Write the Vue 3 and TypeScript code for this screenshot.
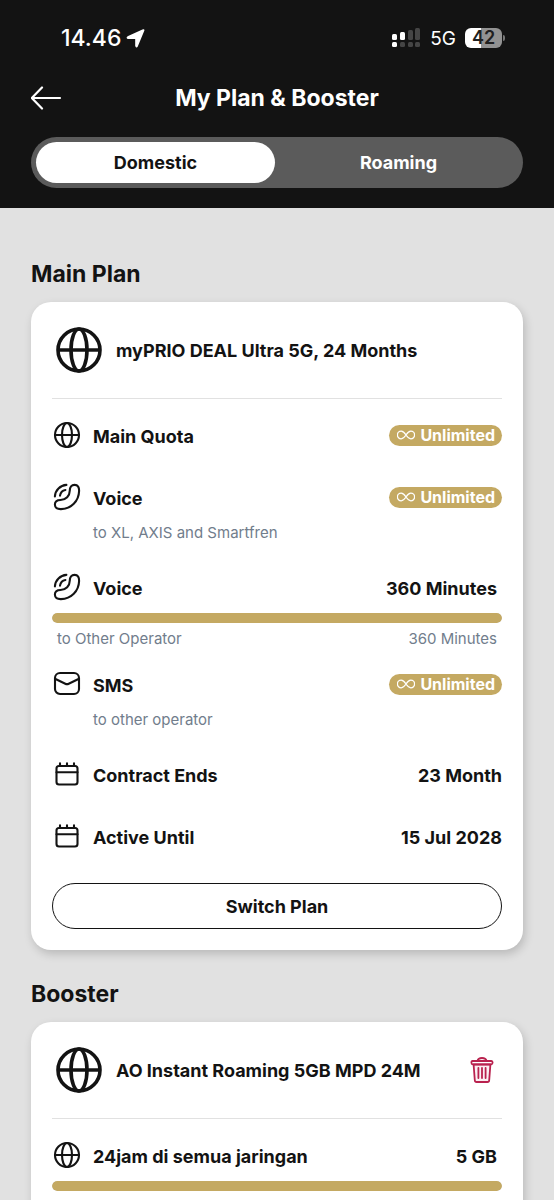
<script setup lang="ts">
import { ref } from 'vue'

type IconName = 'globe' | 'phone' | 'mail' | 'calendar'

interface Benefit {
  icon: IconName
  label: string
  value?: string
  note?: string
  left?: string
  percent?: number
}

const tabs = ['Domestic', 'Roaming']
const active = ref('Domestic')

const plan: Benefit[] = [
  { icon: 'globe', label: 'Main Quota' },
  { icon: 'phone', label: 'Voice', note: 'to XL, AXIS and Smartfren' },
  { icon: 'phone', label: 'Voice', value: '360 Minutes', note: 'to Other Operator', left: '360 Minutes', percent: 100 },
  { icon: 'mail', label: 'SMS', note: 'to other operator' },
  { icon: 'calendar', label: 'Contract Ends', value: '23 Month' },
  { icon: 'calendar', label: 'Active Until', value: '15 Jul 2028' },
]
const booster: Benefit[] = [
  { icon: 'globe', label: '24jam di semua jaringan', value: '5 GB', percent: 100 },
]
const sections = [
  { title: 'Main Plan', name: 'myPRIO DEAL Ultra 5G, 24 Months', rows: plan, main: true },
  { title: 'Booster', name: 'AO Instant Roaming 5GB MPD 24M', rows: booster, main: false },
]
</script>

<template>
  <div class="screen">
    <header class="header">
      <div class="status">
        <div class="clock">
          <span>14.46</span>
          <svg class="arrow" viewBox="0 0 18 18" aria-hidden="true"><path d="M16.6 1.4 10.4 16.3Q9.8 17.2 9.5 16V8.7H2Q.8 8.3 1.8 7.7L15.9 1.2Q16.9.8 16.6 1.4Z" fill="currentColor" stroke="currentColor" stroke-width="1.6" stroke-linejoin="round" /></svg>
        </div>
        <div class="signals">
          <svg class="cell" viewBox="0 0 30 20" aria-hidden="true">
            <g fill="#fff"><rect x="1" y="6" width="5" height="6" rx="1.5" /><rect x="9" y="4" width="5" height="8" rx="1.5" /><rect x="1" y="14" width="5" height="5" rx="1.5" /></g>
            <g fill="#454545"><rect x="17" y="2" width="5" height="10" rx="1.5" /><rect x="24" y="0" width="5" height="12" rx="1.5" /><rect x="9" y="14" width="5" height="5" rx="1.5" /><rect x="17" y="14" width="5" height="5" rx="1.5" /><rect x="24" y="14" width="5" height="5" rx="1.5" /></g>
          </svg>
          <span class="network">5G</span>
          <span class="battery">42</span>
        </div>
      </div>
      <div class="titlebar">
        <button class="back" type="button" aria-label="Back">
          <svg viewBox="0 0 32 26" fill="none" stroke="currentColor" stroke-width="2.2" stroke-linecap="round" stroke-linejoin="round"><path d="M29 13H1M11 2.5 0.800 13 11 23.500" /></svg>
        </button>
        <h1>My Plan &amp; Booster</h1>
      </div>
      <nav class="tabs">
        <button v-for="tab in tabs" :key="tab" type="button" class="tab" :class="{ selected: active === tab }" :aria-pressed="active === tab" @click="active = tab">{{ tab }}</button>
      </nav>
    </header>

    <main class="content">
      <section v-for="section in sections" :key="section.title">
        <h2>{{ section.title }}</h2>
        <article class="card">
          <div class="product">
            <svg class="globe" viewBox="0 0 48 48" fill="none" stroke="currentColor" stroke-width="3.6" aria-hidden="true"><circle cx="24" cy="24" r="21" /><ellipse cx="24" cy="24" rx="8" ry="21" /><path d="M3 24h42" /></svg>
            <h3>{{ section.name }}</h3>
            <button v-if="!section.main" type="button" class="remove" aria-label="Remove booster">
              <svg viewBox="0 0 24 28" fill="none" stroke="currentColor" stroke-width="1.8" stroke-linecap="round" stroke-linejoin="round"><path d="M3.6 8.5l1.2 15.7q.1 1.8 1.8 1.8h10.8q1.7 0 1.800-1.800L20.400 8.500Z" fill="#fbeef2" /><path d="M7.500 4.800C8 2.600 9.400 2 12 2s4 .6 4.500 2.800M2.600 5h18.800q1.200 0 1.200 1.600T21.400 8.300H2.600Q1.400 8.300 1.400 6.600T2.600 5ZM8.400 12v10M12 12v10M15.600 12v10" /></svg>
            </button>
          </div>
          <div v-for="(row, index) in section.rows" :key="index" class="benefit" :class="{ metered: row.percent, noted: row.note && !row.percent }">
            <div class="row">
              <svg class="icon" viewBox="0 0 28 28" fill="none" stroke="currentColor" stroke-width="2.100" stroke-linecap="round" stroke-linejoin="round" aria-hidden="true">
                <template v-if="row.icon === 'globe'"><circle cx="14" cy="14" r="12" /><ellipse cx="14" cy="14" rx="5" ry="12" /><path d="M2 14h24" /></template>
                <template v-else-if="row.icon === 'phone'"><path d="M16.800 7.500C16.800 4 18.500 1.900 21.600 1.900C25 1.900 26.200 4.500 26.100 8C25.800 18.200 18.200 25.800 8 26.100C4.200 26.200 1.900 25 1.900 21.600C1.900 18.400 4 17 7.500 17C13 16.900 16.700 13 16.800 7.500ZM1.900 13.400C2.300 7.200 7.200 2.300 13.400 1.900M7 12.600C7.500 9.700 9.700 7.500 12.400 7" /></template>
                <template v-else-if="row.icon === 'mail'"><rect x="2" y="3" width="24" height="21" rx="5" /><path d="m2.500 9 9.800 4.700q1.700.8 3.400 0l9.800-4.700" /></template>
                <template v-else><rect x="3.500" y="6" width="21" height="18.500" rx="2.500" /><path d="M3.500 12.200h21M7 3.400V6M14 3.400V6M21 3.400V6" /></template>
              </svg>
              <span class="label">{{ row.label }}</span>
              <strong v-if="row.value" class="value">{{ row.value }}</strong>
              <span v-else class="badge">
                <svg viewBox="0 0 18 10" fill="none" stroke="currentColor" stroke-width="1.3" aria-hidden="true"><path d="M9 5C7 2 5.800 1.200 4.200 1.200a3.800 3.800 0 0 0 0 7.600C5.800 8.800 7 8 9 5s3.200-3.800 4.800-3.800a3.800 3.800 0 0 1 0 7.600C12.200 8.800 11 8 9 5Z" /></svg>
                Unlimited
              </span>
            </div>
            <div v-if="row.percent" class="meter"><div class="fill" :style="{ width: row.percent + '%' }"></div></div>
            <div v-if="row.note" class="note"><span>{{ row.note }}</span><span v-if="row.left">{{ row.left }}</span></div>
          </div>
          <button v-if="section.main" type="button" class="switch">Switch Plan</button>
        </article>
      </section>
    </main>
  </div>
</template>

<style>
body { background: #e1e1e1; }
</style>

<style scoped>
* { box-sizing: border-box; }
.screen { font-family: Inter, "Liberation Sans", sans-serif; font-size: 18px; color: #131313; }
h1, h2, h3 { margin: 0; font-weight: 700; }
svg { display: block; flex: none; }
button { font: inherit; color: inherit; cursor: pointer; }
.header { background: #131313; color: #fff; padding: 24px 31px 20px; }
.status { display: flex; justify-content: space-between; align-items: center; height: 28px; padding: 0 21px 0 30px; }
.clock { display: flex; align-items: center; gap: 5px; font-size: 23px; font-weight: 500; }
.arrow { width: 19px; height: 19px; }
.signals { display: flex; align-items: center; }
.cell { width: 30px; height: 20px; margin-right: 9px; }
.network { font-size: 19px; margin-right: 9px; }
.battery { position: relative; width: 37px; height: 20px; border-radius: 6px; background: linear-gradient(90deg, #fff 42%, #929292 42%); color: #202020; font-size: 18px; font-weight: 600; line-height: 20px; text-align: center; }
.battery::after { content: ""; position: absolute; right: -3px; top: 7px; width: 2px; height: 6px; border-radius: 0 2px 2px 0; background: #777; }
.titlebar { display: grid; grid-template-columns: 32px 1fr 32px; align-items: center; height: 92px; }
.back { padding: 0; border: 0; background: none; }
.back svg { width: 32px; height: 26px; }
h1 { font-size: 23px; text-align: center; }
.tabs { display: flex; gap: 4px; height: 51px; padding: 5px; border-radius: 26px; background: #5b5b5b; margin-top: -7px; }
.tab { flex: 1; border: 0; border-radius: 21px; background: none; font-weight: 700; }
.tab.selected { background: #fff; color: #131313; }
.content { padding: 51px 31px 0; }
h2 { font-size: 23px; line-height: 30px; margin-bottom: 13px; }
.card { background: #fff; border-radius: 20px; padding: 0 21px 21px; box-shadow: 2px 4px 10px rgba(0, 0, 0, .18); margin-bottom: 29px; }
.product { display: flex; align-items: center; height: 97px; border-bottom: 1px solid #e1e1e1; padding: 0 8px 0 3px; gap: 13px; margin-bottom: 22px; }
.globe { width: 48px; height: 48px; }
h3 { flex: 1; font-size: 18px; }
.remove { border: 0; padding: 0; background: none; color: #b9214e; }
.remove svg { width: 24px; height: 28px; }
.row { display: flex; align-items: center; height: 28px; }
.benefit { margin-bottom: 34px; }
.benefit.noted { margin-bottom: 29px; }
.icon { width: 28px; height: 28px; margin: 0 12px 0 1px; }
.label { flex: 1; font-weight: 700; padding-top: 2px; }
.value { font-weight: 700; padding-top: 2px; }
.badge { display: flex; align-items: center; gap: 5px; height: 21px; padding: 0 7px 0 8px; border-radius: 11px; background: #c4a962; color: #fff; font-size: 16px; font-weight: 700; }
.badge svg { width: 18px; height: 10px; }
.note { display: flex; justify-content: space-between; padding: 11px 0 0 41px; color: #717d8c; font-size: 15px; line-height: 22px; }
.benefit.metered { margin-bottom: 20px; }
.metered .value { padding-right: 5px; }
.metered .note { padding: 5px 5px 0; }
.meter { height: 10px; margin-top: 12px; border-radius: 5px; background: #e1e1e1; overflow: hidden; }
.fill { height: 100%; border-radius: 5px; background: #c4a962; }
.switch { display: block; width: 100%; height: 46px; margin-top: -1px; border: 1px solid #131313; border-radius: 23px; background: #fff; font-weight: 700; }
</style>
